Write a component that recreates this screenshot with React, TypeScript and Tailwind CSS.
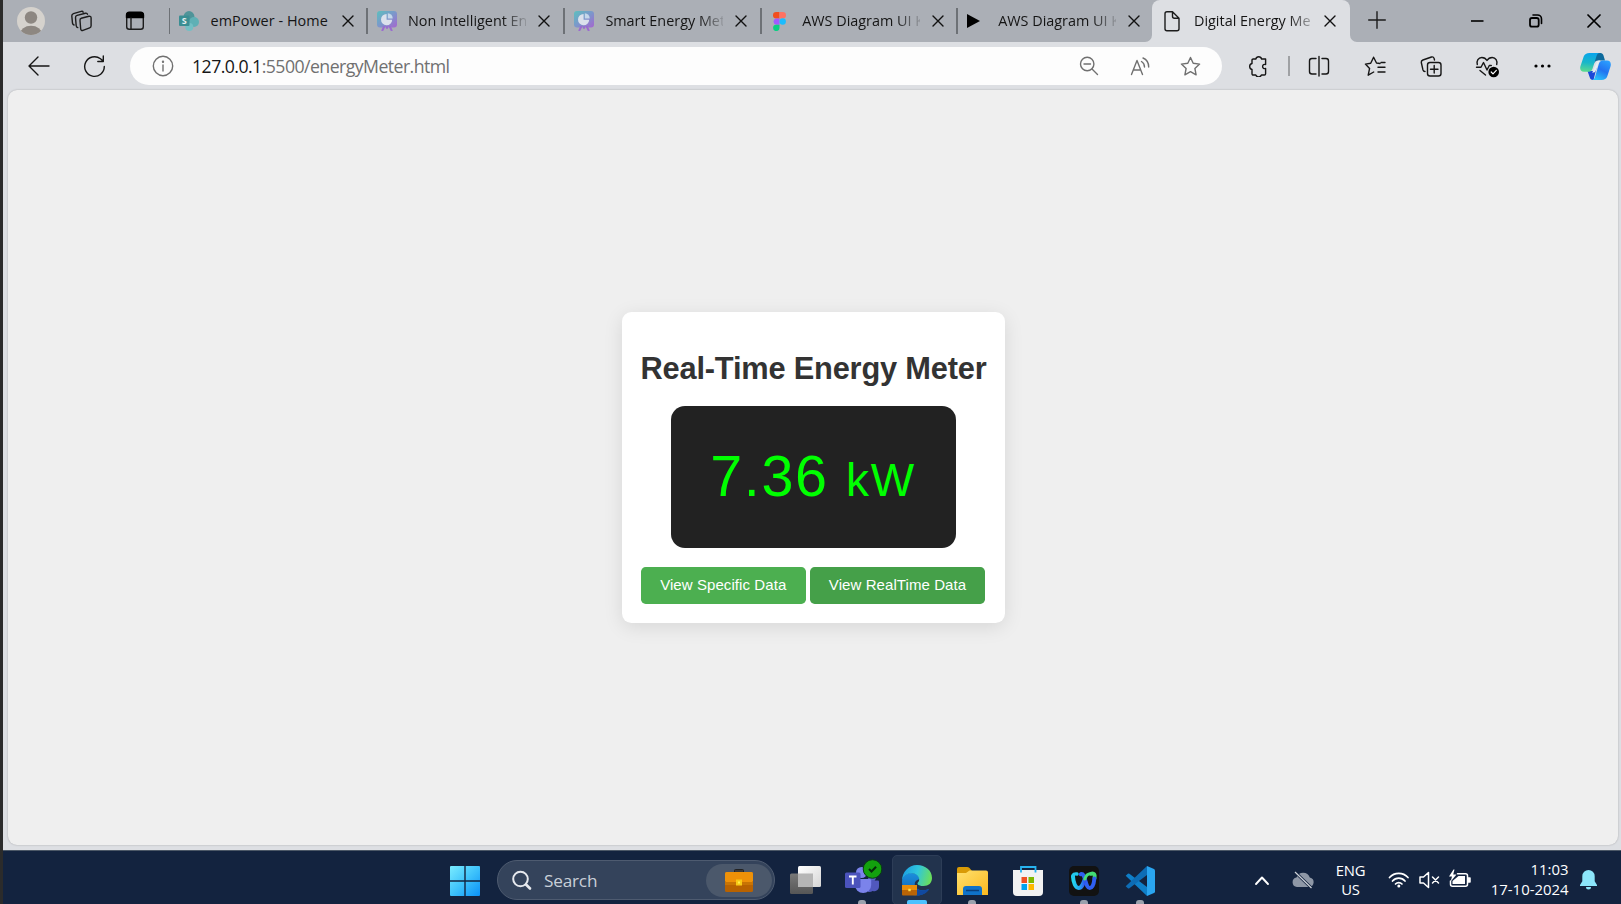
import React from "react";

type IconProps = { box: string; children: React.ReactNode; className?: string };

/** Line icon drawn in window coordinates; `box` is "x y width height". */
function Ico({ box, children, className = "" }: IconProps) {
  const [, , w, h] = box.split(" ");
  return (
    <svg
      viewBox={box}
      width={w}
      height={h}
      fill="none"
      stroke="currentColor"
      strokeWidth="1.4"
      strokeLinecap="round"
      strokeLinejoin="round"
      className={"shrink-0 " + className}
    >
      {children}
    </svg>
  );
}

function Close() {
  return (
    <Ico box="0 0 12 12" className="text-[#111]">
      <path d="M1 1l10 10M11 1L1 11" />
    </Ico>
  );
}

function MeterFavicon({ id }: { id: string }) {
  return (
    <svg viewBox="0 0 20 20" width="20" height="20" className="shrink-0">
      <defs>
        <linearGradient id={id} x1="0" y1="0" x2="1" y2="1">
          <stop offset="0" stopColor="#5bc0be" />
          <stop offset=".5" stopColor="#7c97cb" />
          <stop offset="1" stopColor="#a566cf" />
        </linearGradient>
      </defs>
      <rect width="20" height="16.5" rx="3" fill={`url(#${id})`} />
      <path d="M7 16l-1.6 3.4M13 16l1.6 3.4M10 16v1" stroke="#9b6bd0" strokeWidth="2" strokeLinecap="round" />
      <path d="M9.6 3v5.800h5.600a5.600 5.600 0 1 1-5.600-5.800z" fill="#dbe1ec" />
      <path d="M10.800 2.200a5 5 0 0 1 4.900 5.200h-4.900z" fill="#c5d8ea" />
    </svg>
  );
}

function Sharepoint() {
  return (
    <svg viewBox="0 0 20 20" width="20" height="20" className="shrink-0">
      <circle cx="10" cy="5.5" r="5.4" fill="#4f9499" />
      <circle cx="15" cy="11" r="5" fill="#5fb0b5" />
      <circle cx="10.3" cy="16" r="4" fill="#74bfc4" />
      <rect x="0" y="4.5" width="10.5" height="10.5" rx="1" fill="#3b8e93" />
      <text x="5.2" y="13" textAnchor="middle" fontSize="9" fontWeight="700" fill="#e6eeee" fontFamily="Open Sans">S</text>
    </svg>
  );
}

function Figma() {
  return (
    <svg viewBox="0 0 13 19" width="13" height="19" className="shrink-0">
      <path d="M6.5 0h-3.3a3.2 3.2 0 0 0 0 6.4h3.3z" fill="#f24e1e" />
      <path d="M6.5 0h3.3a3.2 3.2 0 0 1 0 6.4H6.5z" fill="#ff7262" />
      <path d="M6.5 6.4H3.2a3.2 3.2 0 0 0 0 6.3h3.3z" fill="#a259ff" />
      <circle cx="9.7" cy="9.5" r="3.2" fill="#1abcfe" />
      <path d="M6.5 12.7H3.2a3.2 3.2 0 1 0 3.3 3.1z" fill="#0acf83" />
    </svg>
  );
}

const FADE = "mr-[12px] [mask-image:linear-gradient(to_right,#000_80%,rgba(0,0,0,0.15)_100%)]";

function Tab({ icon, title, width, text = FADE }: { icon: React.ReactNode; title: string; width: string; text?: string }) {
  return (
    <div className={"flex h-[42px] shrink-0 items-center " + width}>
      <div className="h-[26px] w-[1.5px] shrink-0 bg-[#6d7176]" />
      <div className="ml-[9px] flex w-[22px] shrink-0 justify-start">{icon}</div>
      <div
        className={
          "ml-[9.500px] w-[118px] shrink-0 overflow-hidden whitespace-nowrap text-[14.4px] leading-[20px] text-[#151515] " + text
        }
      >
        {title}
      </div>
      <Close />
    </div>
  );
}

function TabBar() {
  return (
    <div className="flex h-[42px] items-center bg-[#abafb6]">
      <div className="flex w-[165.5px] shrink-0 items-center">
        <svg viewBox="17 7 28 28" width="28" height="28" className="ml-[14px]">
          <clipPath id="av"><circle cx="31" cy="21" r="14" /></clipPath>
          <circle cx="31" cy="21" r="14" fill="#d5d2cd" />
          <g clipPath="url(#av)" fill="#8d8781">
            <circle cx="31" cy="17.5" r="6.2" />
            <ellipse cx="31" cy="34" rx="11" ry="8.3" />
          </g>
        </svg>
        <Ico box="70 9 24 24" className="ml-[25px] text-[#1c1c1c]">
          <path d="M81.300 18.200l7.600-1.900c1.300-.3 2.200.4 2.200 1.700v7.800c0 1-.5 1.800-1.500 2.100l-6.600 2.500c-1.200.4-2.200-.2-2.300-1.400l-.7-8.500c-.1-1.200.2-2 1.300-2.300z" />
          <path d="M77.800 27.600c-.9-.2-1.500-.9-1.600-1.900l-.7-8c-.1-1.200.5-2 1.600-2.300l8.300-2.200c1-.2 1.800.1 2.100 1" />
          <path d="M74 25c-.9-.3-1.400-1-1.500-1.900L71.800 16c-.1-1.200.5-2 1.600-2.400l7.800-2.300c1-.3 1.700.1 2 .9" />
        </Ico>
        <Ico box="125 11 20 20" className="ml-[31px] text-[#1c1c1c]">
          <rect x="126.700" y="12.700" width="16.600" height="16.600" rx="2.500" />
          <path d="M126.500 17.500v-2.500a2.700 2.700 0 0 1 2.700-2.700h11.600a2.700 2.700 0 0 1 2.700 2.700v2.500z" fill="#000" stroke="#000" />
          <path d="M131 18v11" />
        </Ico>
      </div>
      <Tab width="w-[197.5px]" icon={<Sharepoint />} title="emPower - Home" text="mr-[13.500px] tracking-[0.05px]" />
      <Tab width="w-[197.4px]" icon={<MeterFavicon id="m1" />} title="Non Intelligent En" />
      <Tab width="w-[196.8px]" icon={<MeterFavicon id="m2" />} title="Smart Energy Met" />
      <Tab width="w-[196px]" icon={<div className="ml-[2px]"><Figma /></div>} title="AWS Diagram UI K" />
      <Tab
        width="w-[195.8px]"
        icon={<svg width="13" height="14" viewBox="0 0 13 14"><path d="M0 0l13 7-13 7z" fill="#000" /></svg>}
        title="AWS Diagram UI K"
      />
      <svg width="7" height="42" viewBox="0 0 7 42" className="-ml-[7px] shrink-0"><path d="M7 35v7H0a7 7 0 0 0 7-7z" fill="#dddfe3" /></svg>
      <div className="flex h-[42px] w-[198px] shrink-0 items-center rounded-t-[8px] bg-[#dddfe3]">
        <Ico box="1163 10 18 22" className="ml-[11px] text-[#1c1c1c]">
          <path d="M1172.500 11.800h-5.500a2 2 0 0 0-2 2v14.900a2 2 0 0 0 2 2h10a2 2 0 0 0 2-2V18.300zM1172.500 11.800v4.500a2 2 0 0 0 2 2h4.500" />
        </Ico>
        <div className="ml-[13px] mr-[10px] w-[120px] shrink-0 overflow-hidden whitespace-nowrap text-[14.4px] leading-[20px] text-[#151515] [mask-image:linear-gradient(to_right,#000_78%,rgba(0,0,0,0.2)_100%)]">
          Digital Energy Me
        </div>
        <Close />
      </div>
      <svg width="7" height="42" viewBox="0 0 7 42" className="shrink-0"><path d="M0 35v7h7a7 7 0 0 1-7-7z" fill="#dddfe3" /></svg>
      <Ico box="0 0 18 18" className="ml-[11px] -mt-[2px] text-[#1c1c1c]"><path d="M9 .7v16.600M.7 9h16.600" /></Ico>
      <div className="ml-auto flex items-center gap-[44.500px] pr-[20px] text-black">
        <Ico box="1470 13 14 14"><path d="M1471 20h12.500" strokeWidth="1.600" strokeLinecap="butt" /></Ico>
        <Ico box="1529 14 14 15"><rect x="1530" y="18" width="8.700" height="8.700" rx="2" strokeWidth="1.800" /><path d="M1533 15h4.500a4 4 0 0 1 4 4v4.500" strokeWidth="1.600" /></Ico>
        <Ico box="0 0 14 14"><path d="M1 1l12 12M13 1L1 13" strokeWidth="1.700" /></Ico>
      </div>
    </div>
  );
}

function Copilot() {
  return (
    <svg viewBox="0 0 31 27" width="31" height="27" className="shrink-0">
      <defs>
        <linearGradient id="c1" x1=".3" y1="0" x2=".2" y2="1">
          <stop offset="0" stopColor="#08a4ea" />
          <stop offset=".5" stopColor="#19b7c9" />
          <stop offset="1" stopColor="#5fdc8c" />
        </linearGradient>
        <linearGradient id="c2" x1=".8" y1="0" x2=".3" y2="1">
          <stop offset="0" stopColor="#2aa0ff" />
          <stop offset=".5" stopColor="#2272f0" />
          <stop offset="1" stopColor="#2ac4fb" />
        </linearGradient>
      </defs>
      <path d="M14 0h6.500c1.500 0 2.500 1 3 2.500l1.500 5h-7c-2 0-3 1-3.600 3z" fill="#0d6a9c" />
      <path d="M7.500 18h6l3-3-3 12h-.5c-1.800 0-2.800-1-3.300-2.700z" fill="#1b49d8" />
      <path d="M9.500 0H20c-2.300 0-3 1.500-3.800 4l-3.600 11.500c-.6 2-1.800 3.300-4 3.300H4C.8 18.800-.5 16.300.5 13l3.200-9.500C4.600 1.200 6.500 0 9.500 0z" fill="url(#c1)" />
      <path d="M21.500 27H11.500c2.300 0 3.100-1.500 3.800-4l3.600-12.200c.6-2 1.800-3.300 4-3.300H27c3.200 0 4.500 2.600 3.500 6l-3.200 9.700c-.9 2.600-2.800 3.800-5.800 3.800z" fill="url(#c2)" />
      <path d="M16.300 10.500c.6-2 1.300-3 3-3h1.200c-1.200.6-1.700 1.800-2.200 3.300L15.600 18c-.6 1.400-1.300 1.600-2.500 1.600h-1.200c.9-.7 1.300-1.800 1.800-3.300z" fill="#e4eef6" />
    </svg>
  );
}

const STAR = "M0-9l2.700 5.800 6.400.8-4.700 4.400 1.200 6.300L0 5.200-5.600 8.300l1.200-6.300L-9.100-2.400l6.400-.8z";

function Toolbar() {
  return (
    <div className="flex h-[48px] items-center bg-[#dddfe3] text-[#161616]">
      <Ico box="28 56 22 20" className="ml-[25px]"><path d="M49 66H29.500M38 57l-9 9 9 9" /></Ico>
      <Ico box="83 55 24 23" className="ml-[33px]"><path d="M104.300 66.500A9.800 9.800 0 1 1 100.500 58.800L103 61M103.300 56v5.500h-5.500" /></Ico>
      <div className="ml-[23px] flex h-[38px] w-[1092px] shrink-0 items-center rounded-full bg-[#fdfdfd] text-[#707070]">
        <Ico box="152 55 22 22" className="ml-[22px]">
          <circle cx="163" cy="66" r="9.700" /><path d="M163 65v6" /><circle cx="163" cy="61.700" r=".5" fill="currentColor" />
        </Ico>
        <div className="ml-[18px] whitespace-nowrap text-[17.700px] leading-[24px] tracking-[-0.550px]">
          <span className="text-[#161616]">127.0.0.1</span>:5500/energyMeter.html
        </div>
        <div className="ml-auto flex items-center pr-[21px]">
          <Ico box="1079 56 20 20"><circle cx="1087.200" cy="64" r="6.700" /><path d="M1092 69l5.500 5.500M1084 64h6.500" /></Ico>
          <Ico box="1130 55 22 20" className="ml-[31px]">
            <path d="M1131.500 73.500l5.500-14 5.500 14M1133.500 69h7M1141.500 60.500c2 1.200 3 3 3 5.500M1143 57c3.500 1.500 5.700 5 5.700 9" />
          </Ico>
          <Ico box="1179 55 22 22" className="ml-[27px]"><path transform="translate(1190.500 66.500)" d={STAR} /></Ico>
        </div>
      </div>
      <Ico box="1248 55 22 22" className="ml-[25px]">
        <path d="M1255 59h1.800a3 3 0 0 1 5.800 0h4v5.500c-1.400-.3-3 .2-3 2s1.600 2.300 3 2v5.300a1.200 1.200 0 0 1-1.200 1.200h-3a3 3 0 0 1-5.600 0h-2.600a1.200 1.200 0 0 1-1.200-1.200v-4.300a3.100 3.100 0 0 1 0-6V60.200a1.200 1.200 0 0 1 1.200-1.200z" />
      </Ico>
      <div className="ml-[19px] h-[20px] w-[1.500px] bg-[#9fa1a4]" />
      <Ico box="1308 55 22 22" className="ml-[18.500px]">
        <path d="M1316 58.500h-4a2.500 2.500 0 0 0-2.500 2.500v10.500a2.500 2.500 0 0 0 2.500 2.500h4M1322 58.500h4a2.500 2.500 0 0 1 2.500 2.500v10.500a2.500 2.500 0 0 1-2.500 2.500h-4M1319 56.500v19.500" />
      </Ico>
      <Ico box="1364 55 24 22" className="ml-[34px]">
        <path d="M1380 63.500l-3.500-.5-2.900-5.800-2.900 6.100-5.300.8 4.200 4.300-1.400 6.800 5.500-3.200M1378 67.200h7M1381 62.500h4M1378 72h7" />
      </Ico>
      <Ico box="1420 54 23 24" className="ml-[32px]">
        <rect x="1427.500" y="62.500" width="13.500" height="13.500" rx="2.500" />
        <path d="M1434.200 65.500v7.500M1430.500 69.200h7.500M1425 71.500c-1 0-1.800-.8-2.100-1.800l-1.600-7.200c-.2-1.200.4-2.100 1.600-2.500l8.600-3c1.200-.3 2.200.2 2.600 1.400l.4 1.600" />
      </Ico>
      <Ico box="1475 55 25 23" className="ml-[32px]">
        <path d="M1477.300 64.500c-1-3.500 1-7 4.500-7 2.200 0 4 1 5.200 3 1.200-2 3-3 5.200-3 3.500 0 5.500 3.500 4.500 7M1476.500 67.300h4.500l2.500-4.800 3.500 7.500 2.300-4.500h2M1480 70.500l5.500 4.500" />
        <circle cx="1493.700" cy="72" r="5.300" fill="#000" stroke="none" />
        <path d="M1491.200 72l1.800 1.800 3.300-3.500" stroke="#fff" strokeWidth="1.200" />
      </Ico>
      <svg width="17" height="4" viewBox="0 0 17 4" className="ml-[34px] shrink-0"><circle cx="2" cy="2" r="1.600" /><circle cx="8.500" cy="2" r="1.600" /><circle cx="15" cy="2" r="1.600" /></svg>
      <div className="ml-[28.500px]"><Copilot /></div>
    </div>
  );
}

function Card() {
  return (
    <div className="flex h-[311px] w-[383px] flex-col items-center rounded-[9.400px] bg-white font-['Liberation_Sans',Arial,sans-serif] shadow-[0_4px_19px_rgba(0,0,0,0.1)]">
      <h1 className="mt-[38px] whitespace-nowrap pl-px text-[30.800px] font-bold leading-[38px] tracking-[-0.200px] text-[#333]">Real-Time Energy Meter</h1>
      <div className="mt-[18px] flex h-[142px] w-[285px] items-center justify-center rounded-[14px] bg-[#222]">
        <div className="flex items-baseline whitespace-nowrap text-[57.500px] leading-none tracking-[1.600px] text-[#0f0]">
          <span>7.36</span>
          <span className="ml-[17.500px] text-[46px]">kW</span>
        </div>
      </div>
      <div className="mt-[19px] flex gap-[4px] text-[15px] tracking-[0.080px] text-white">
        <button className="h-[37px] w-[165px] rounded-[4.700px] bg-[#4caf50] pb-px">View Specific Data</button>
        <button className="h-[37px] w-[175.500px] rounded-[4.700px] bg-[#45a049] pb-px">View RealTime Data</button>
      </div>
    </div>
  );
}

function Briefcase({ w, h }: { w: number; h: number }) {
  return (
    <svg viewBox="0 0 28 23" width={w} height={h} className="shrink-0">
      <path d="M9.500 4V1.500q0-1 1-1h7q1 0 1 1V4" fill="#3c3a38" stroke="#222" />
      <rect y="3" width="28" height="20" rx="1.500" fill="#b86200" />
      <path d="M0 12V4.500Q0 3 1.500 3h25Q28 3 28 4.500V12l-2 2H2z" fill="#ee9108" />
      <path d="M0 13h28v3H0z" fill="#c87404" />
      <rect x="11" y="10.500" width="6" height="6" fill="#f7c915" />
      <rect x="13" y="12.500" width="2" height="2" fill="#fff04a" />
    </svg>
  );
}

function Slot({ children, mark = "" }: { children: React.ReactNode; mark?: string }) {
  return (
    <div className="flex h-[54px] w-[56px] shrink-0 flex-col items-center">
      <div className="flex h-[49px] items-center pt-[10px]">{children}</div>
      <div className={"h-[4px] rounded-t-[3px] " + mark} />
    </div>
  );
}

const DOT = "w-[8px] bg-[#9ba1ad]";

function Taskbar() {
  return (
    <div className="flex h-[54px] w-[1618px] items-start overflow-hidden border-t border-[#4c5867] bg-[#13233f] text-white">
      <svg viewBox="0 0 30 30" width="30" height="30" className="ml-[447px] mt-[15px] shrink-0">
        <defs>
          <linearGradient id="win" x1="0" y1="0" x2="1" y2="1"><stop offset="0" stopColor="#7aecff" /><stop offset=".5" stopColor="#3fc3fb" /><stop offset="1" stopColor="#0a91f8" /></linearGradient>
        </defs>
        <path d="M1 0h13.300v14.300H0V1q0-1 1-1zM15.700 0H29q1 0 1 1v13.300H15.700zM0 15.700h14.300V30H1q-1 0-1-1zM15.700 15.700H30V29q0 1-1 1H15.700z" fill="url(#win)" />
      </svg>
      <div className="ml-[17px] mt-[9px] flex h-[40px] w-[278px] shrink-0 items-center rounded-full border border-[#4e5b70] bg-[#34435b]">
        <Ico box="511 870 21 21" className="ml-[13px] text-[#e6e9ee]"><circle cx="520.500" cy="879" r="7.300" strokeWidth="2" /><path d="M526 884.500l4 4" strokeWidth="2.600" /></Ico>
        <span className="ml-[12px] mt-px text-[17.200px] leading-[24px] tracking-[-0.200px] text-[#c9cfd8]">Search</span>
        <div className="ml-auto mr-[2px] flex h-[33px] w-[66px] items-center justify-center rounded-full bg-[#4b586b]"><Briefcase w={28} h={23} /></div>
      </div>
      <svg viewBox="0 0 31 28" width="31" height="28" className="ml-[15px] mt-[15px] shrink-0">
        <defs>
          <linearGradient id="tv" x1="0" y1="0" x2="1" y2="1"><stop offset="0" stopColor="#fff" /><stop offset="1" stopColor="#d5d5d5" /></linearGradient>
          <linearGradient id="tv2" x1="0" y1="0" x2="0" y2="1"><stop offset="0" stopColor="#787878" /><stop offset="1" stopColor="#565656" /></linearGradient>
        </defs>
        <rect x="0" y="7.500" width="23" height="20.500" rx="1.500" fill="url(#tv2)" />
        <rect x="8" y="0" width="23" height="21" rx="1.500" fill="url(#tv)" />
        <path d="M8 7.500h15V21H8z" fill="#b5b5b5" />
      </svg>

      <div className="ml-[12.500px] flex">
        <Slot mark={DOT}>
          <svg viewBox="844 859 40 36" width="40" height="36" className="-mt-[7px] ml-[2px]">
            <circle cx="873" cy="877" r="4" fill="#5b62c6" />
            <path d="M862 880h13q1.200 0 1.200 1.500V886c0 4-3 6-7 6z" fill="#5158bd" />
            <path d="M868 880.500h11q1 0 1 1.200v4.500a5 5 0 0 1-9 3z" fill="#5158bd" />
            <circle cx="862.500" cy="872.500" r="5.500" fill="#7b83eb" />
            <path d="M856 879h15q1.200 0 1.200 1.500V885a8 8 0 0 1-16.200 0z" fill="#7b83eb" />
            <rect x="846" y="872.500" width="15.500" height="15.500" rx="1.500" fill="#4b53bc" />
            <path d="M850 876.500h7.500M853.800 876.500v8" stroke="#fff" strokeWidth="1.900" />
            <circle cx="873.500" cy="869" r="9.300" fill="#13a10e" stroke="#0b3a16" strokeWidth="1" />
            <path d="M870 869l2.500 2.500 4.600-4.800" stroke="#052e09" strokeWidth="2" fill="none" />
          </svg>
        </Slot>
        <div className="ml-[2px] mt-[4px] flex h-[50px] w-[50px] flex-col items-center rounded-[5px] border border-[#2d3d57] bg-[#22334d] pt-[9px]">
          <svg viewBox="902 865 30 31" width="30" height="31" className="shrink-0">
            <defs>
              <linearGradient id="e1" x1="0" y1=".3" x2="1" y2=".5"><stop offset="0" stopColor="#1b9de2" /><stop offset=".5" stopColor="#30c6dc" /><stop offset="1" stopColor="#6be05a" /></linearGradient>
              <linearGradient id="e2" x1="0" y1="0" x2="0" y2="1"><stop offset="0" stopColor="#1b8fdc" /><stop offset="1" stopColor="#0f5fb5" /></linearGradient>
            </defs>
            <path d="M902 882c0-5 4-9 9-9s8.500 3 8.500 6.500c-3 0-5.500 2.500-4.500 6 1.200 4.500 7 6 14 3.500-2.500 4-7 6.500-12 6.500-9 0-15-6-15-13.500z" fill="url(#e2)" />
            <path d="M902 881c0-9 6.500-16 15-16s15 5.500 15 13c0 5-3.500 8-8.500 8-3.500 0-6-1.300-6-2.600 0-1 1.700-1.500 1.700-4 0-3-3-6.200-7.700-6.200-4.500 0-8.500 3-9.500 7.800z" fill="url(#e1)" />
            <path d="M914.500 884c0 5.500 6.500 8 14.800 5.200-2.600 3.800-6.800 6.300-12.300 6.300z" fill="#1149a0" />
            <rect x="902" y="885" width="15" height="10.500" rx="1" fill="#b96406" />
            <path d="M902 885h15v5h-15z" fill="#e88d0a" />
            <rect x="908.300" y="888.800" width="2.400" height="2.400" fill="#ffe14a" />
          </svg>
          <div className="mt-[4px] h-[4px] w-[20px] shrink-0 rounded-t-[2px] bg-[#4cc2ff]" />
        </div>
        <div className="ml-[2.500px] flex">
          <Slot mark={DOT}>
            <svg viewBox="0 0 31 28" width="31" height="28">
              <defs><linearGradient id="fo" x1="0" y1="0" x2="1" y2="1"><stop offset="0" stopColor="#ffe06e" /><stop offset="1" stopColor="#fbb91f" /></linearGradient></defs>
              <path d="M0 2q0-2 2-2h8q1.500 0 2.500 1L15 4v8H0z" fill="#d99a06" />
              <path d="M0 6h9l3.500-2.500H29q2 0 2 2V28H0z" fill="url(#fo)" />
              <path d="M6 28v-6q0-3 3-3h13q3 0 3 3v6z" fill="#0f72c8" />
              <path d="M9 23.500h13" stroke="#083f7c" strokeWidth="1.500" />
            </svg>
          </Slot>
          <Slot>
            <svg viewBox="0 0 30 30" width="30" height="30">
              <path d="M0 4h30v22q0 4-4 4H4q-4 0-4-4z" fill="#f2f2f2" />
              <path d="M8 6.500V1h14.500v5.500" fill="none" stroke="#27b3f0" strokeWidth="1.800" />
              <path d="M8.500 11H14v6H8.500z" fill="#f05022" /><path d="M15.500 11H21v6h-5.500z" fill="#7fb900" />
              <path d="M8.500 18H14v6H8.500z" fill="#02a3ee" /><path d="M15.500 18H21v6h-5.500z" fill="#feb800" />
            </svg>
          </Slot>
          <Slot mark={DOT}>
            <svg viewBox="0 0 30 30" width="30" height="30" fill="none" strokeLinecap="round" strokeLinejoin="round">
              <defs>
                <linearGradient id="w1" x1="0" y1="0" x2="1" y2="0"><stop offset="0" stopColor="#22d6ee" /><stop offset=".6" stopColor="#25a0f0" /><stop offset="1" stopColor="#2f55ec" /></linearGradient>
              </defs>
              <rect width="30" height="30" rx="5" fill="#121212" />
              <path d="M22 7.800c3-1 4.200 1 3.600 4" stroke="#43dd73" strokeWidth="4" />
              <path d="M25.400 12.500c-.5 5-2 9.500-4.700 9.500-2 0-3-2.500-4.400-7.500-1-4-2-7-4.500-6.300" stroke="#2f5ff0" strokeWidth="4" />
              <path d="M4 10.500c.3 6 2.500 11.500 5.700 11.500 3 0 4.300-3.500 5.800-8" stroke="url(#w1)" strokeWidth="4" />
              <path d="M15.800 13c1.200-3.500 3-5.300 5.500-5.300" stroke="#45dd78" strokeWidth="3" />
              <path d="M4 10.500c-.2-2 1.800-3 4-2.500" stroke="#22c9ec" strokeWidth="3.400" />
            </svg>
          </Slot>
          <Slot mark={DOT}>
            <svg viewBox="0 0 30 30" width="30" height="30">
              <path d="M.7 9.700l2.100-2q.8-.6 1.600 0L22 21v9z" fill="#0f7fc9" />
              <path d="M.7 20.300l2.100 2q.8.6 1.600 0L22 9V0z" fill="#0d6cb5" />
              <path d="M22 0l7 3q1 .5 1 1.500v21q0 1-1 1.500l-7 3z" fill="#2aa5f0" />
            </svg>
          </Slot>
        </div>
      </div>

      <div className="ml-auto flex h-[53px] items-center pr-[24.500px] pt-[5px]">
        <Ico box="1253 874 16 11"><path d="M1255 883l6-6.500 6 6.500" strokeWidth="1.900" /></Ico>
        <svg viewBox="1290 871 24 20" width="24" height="20" className="ml-[21px] shrink-0">
          <path d="M1296 888a4.800 4.800 0 0 1-.5-9.500 7 7 0 0 1 13.300 0A4.800 4.800 0 0 1 1308 888z" fill="#8e97a6" />
          <path d="M1294 873l16.500 16" stroke="#13233f" strokeWidth="3" /><path d="M1294 873l16.500 16" stroke="#d0d4da" strokeWidth="1.200" />
        </svg>
        <div className="ml-[18px] w-[36px] text-center text-[14.800px] leading-[19px] tracking-[-0.200px]"><div>ENG</div><div>US</div></div>
        <Ico box="1387 871 22 17" className="-mt-px ml-[19px]">
          <path d="M1388.500 877.500a12.500 12.500 0 0 1 18.500 0M1391.500 881a8.300 8.300 0 0 1 12.500 0M1394.500 884a4.500 4.500 0 0 1 6.500 0" strokeWidth="1.700" /><circle cx="1397.800" cy="886" r="1.500" fill="#fff" stroke="none" />
        </Ico>
        <Ico box="1417 871 22 18" className="-mt-px ml-[8px]"><path d="M1419 877h3.500l5-4.500v15l-5-4.500h-3.500zM1431.500 877l6 6M1437.500 877l-6 6" strokeWidth="1.500" /></Ico>
        <Ico box="1447 869 24 20" className="-mt-[3px] ml-[8px]">
          <path d="M1456.500 873.700h8a2 2 0 0 1 2 2v8.600a2 2 0 0 1-2 2h-13a2 2 0 0 1-2-2v-3.300M1467.500 878v4h1.500v-4z" strokeWidth="1.500" />
          <path d="M1457.500 876h6.500v8h-12.500v-3z" fill="#fff" stroke="none" />
          <path d="M1452.500 869.500l-4.500 7h3l-1.300 5 5.800-7h-3.300l1.300-5z" fill="#fff" stroke="none" />
        </Ico>
        <div className="-mt-[2px] ml-[17px] w-[80px] whitespace-nowrap text-right text-[14.900px] leading-[20px]"><div>11:03</div><div>17-10-2024</div></div>
        <svg viewBox="0 0 17 20" width="17" height="20" className="ml-[11px] shrink-0">
          <path d="M8.500 0a6.200 6.200 0 0 1 6.200 6.200v5L17 15v1H0v-1l2.300-3.800v-5A6.200 6.200 0 0 1 8.500 0zM6 17h5a2.500 2.500 0 0 1-5 0z" fill="#8ce6fb" />
        </svg>
      </div>
    </div>
  );
}

export default function App() {
  return (
    <div className="flex h-[904px] w-[1621px] overflow-hidden bg-[#dddfe3] font-['Open_Sans','Noto_Sans',sans-serif]">
      <div className="w-[3px] shrink-0 bg-[#2b2b2b]" />
      <div className="flex w-[1618px] flex-col">
        <TabBar />
        <Toolbar />
        <main className="mb-[5px] ml-[5px] mr-[3px] flex h-[755px] shrink-0 items-center justify-center rounded-[9px] bg-[#efefef] shadow-[0_0_2px_rgba(0,0,0,0.25)]">
          <Card />
        </main>
        <Taskbar />
      </div>
    </div>
  );
}
